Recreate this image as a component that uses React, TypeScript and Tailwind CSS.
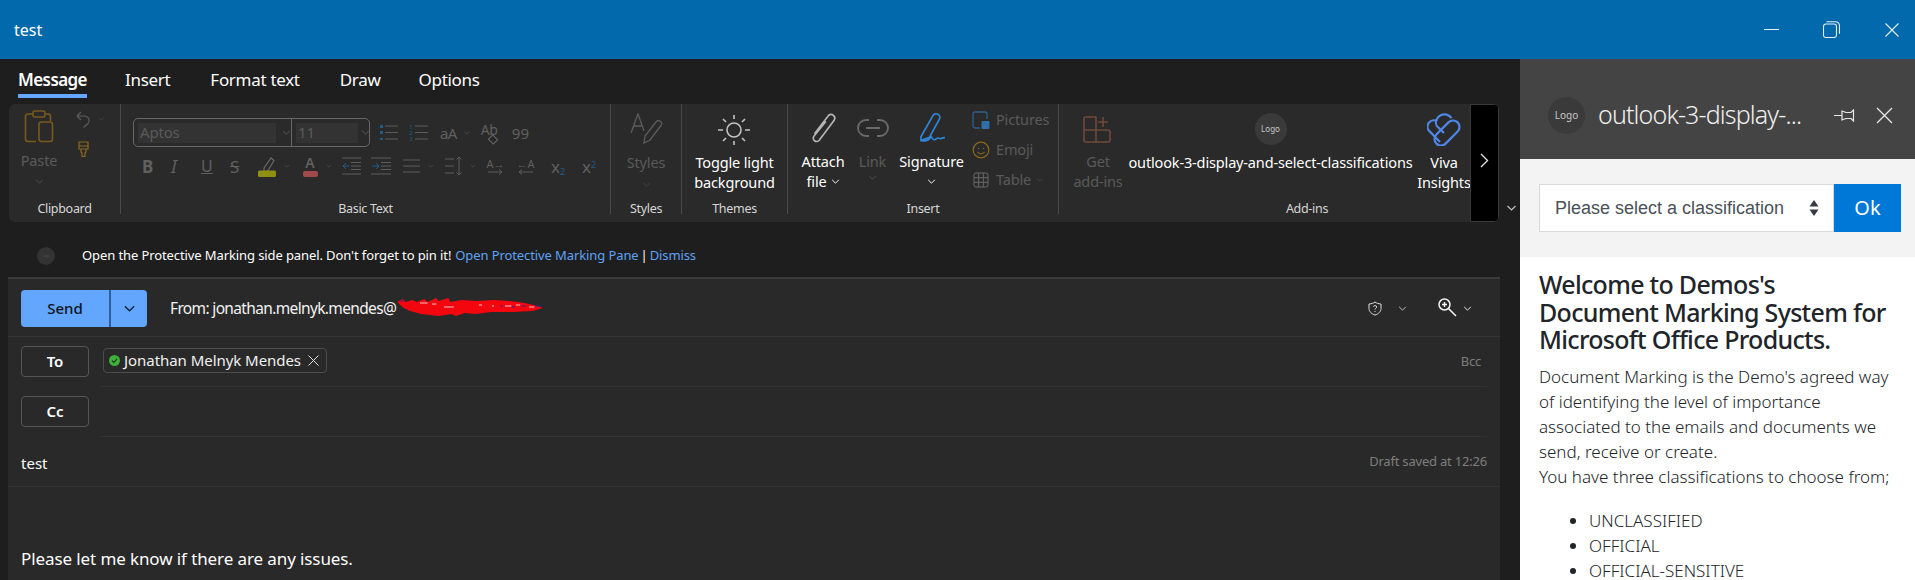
const ui = "font-['Noto_Sans','Open_Sans',sans-serif]";

function Chev({ className = "w-[8px] h-[5px]" }: { className?: string }) {
  return (
    <svg viewBox="0 0 10 6" className={`shrink-0 ${className}`} fill="none" stroke="currentColor" strokeWidth="1.2">
      <path d="M1 1l4 4 4-4" />
    </svg>
  );
}

function Lines({ ys, x1 = 0, x2 = 18, w = 18, h = 16, color = "#5c5c5c" }: { ys: number[]; x1?: number; x2?: number; w?: number; h?: number; color?: string }) {
  return (
    <svg width={w} height={h} viewBox={`0 0 ${w} ${h}`} fill="none" stroke={color} strokeWidth="1">
      {ys.map((y) => (
        <path key={y} d={`M${x1} ${y}H${x2}`} />
      ))}
    </svg>
  );
}

function Logo({ size, text }: { size: string; text: string }) {
  return (
    <div className={`flex shrink-0 items-center justify-center rounded-full bg-[#3a3a3a] text-[#c8c8c8] ${size} ${text}`}>Logo</div>
  );
}

function RibbonLabel({ children }: { children: string }) {
  return <div className="flex h-[16px] items-center justify-center pt-[6px] text-[12.500px] tracking-[-0.3px] text-[#d6d6d6]">{children}</div>;
}

function TwoLines({ a, b, dim }: { a: string; b?: React.ReactNode; dim?: boolean }) {
  return (
    <div className={`mt-[6px] text-center text-[14.500px] leading-[20px] tracking-[-0.15px] whitespace-nowrap ${dim ? "text-[#5a5a5a]" : "text-white"}`}>
      <div>{a}</div>
      <div className="flex h-[20px] items-center justify-center gap-[4px]">{b}</div>
    </div>
  );
}

function Clipboard() {
  return (
    <div className="flex h-[110px] w-[112px] shrink-0 flex-col border-r border-[#4a4a4a]">
      <div className="flex h-[94px] pl-[15px] pt-[6px]">
        <div className="flex w-[30px] flex-col items-center">
          <svg width="30" height="33" viewBox="0 0 30 33" fill="none" stroke="#7a5a1c" strokeWidth="1.6">
            <path d="M9 4H4a2.5 2.5 0 0 0-2.500 2.500V29a2.500 2.500 0 0 0 2.500 2.500h8" />
            <path d="M21 4h3a2.500 2.500 0 0 1 2.500 2.500V11" />
            <rect x="9" y="1" width="12" height="6" rx="2" />
            <rect x="15" y="12" width="13.500" height="19.500" rx="2.500" />
          </svg>
          <div className="mt-[7px] text-[14.500px] leading-[20px] tracking-[-0.15px] text-[#5a5a5a]">Paste</div>
          <Chev className="mt-[9px] h-[5px] w-[9px] text-[#4f4f4f]" />
        </div>
        <div className="ml-[22px] flex flex-col">
          <div className="flex items-center gap-[7px]">
            <svg width="15" height="18" viewBox="0 0 15 18" fill="none" stroke="#5c5c5c" strokeWidth="1.2">
              <path d="M1 6h8a4.500 4.500 0 0 1 3 7.500L7.500 17.500M1 6l4-4M1 6l4 4" />
            </svg>
            <Chev className="h-[4px] w-[6px] text-[#4a4a4a]" />
          </div>
          <svg className="ml-[2px] mt-[13px]" width="11" height="17" viewBox="0 0 11 17" fill="none" stroke="#8a6a1c" strokeWidth="1.2">
            <path d="M1 1h9v7H1zM1 5h9M3 8v3l1 1v3.500h3V12l1-1V8" />
          </svg>
        </div>
      </div>
      <div className="h-[2px]" />
      <RibbonLabel>Clipboard</RibbonLabel>
    </div>
  );
}

function BasicText() {
  const dim = "text-[#606060]";
  return (
    <div className="flex h-[110px] w-[490px] shrink-0 flex-col border-r border-[#4a4a4a]">
      <div className="h-[94px] pl-[12px] pt-[14px]">
        <div className="flex items-center">
          <div className="flex h-[29px] w-[237px] shrink-0 items-center rounded-[5px] border border-[#686868]">
            <div className="flex h-full w-[158px] items-center border-r border-[#686868] pl-[4px]">
              <div className="flex h-[20px] w-[138px] items-center bg-[#333333] pl-[2px] text-[15px] tracking-[-0.2px] text-[#5a5a5a]">Aptos</div>
              <Chev className="ml-[6px] h-[5px] w-[9px] text-[#585858]" />
            </div>
            <div className="flex h-full flex-1 items-center pl-[4px]">
              <div className="flex h-[20px] w-[62px] items-center bg-[#333333] pl-[2px] text-[15px] text-[#5a5a5a]">11</div>
              <Chev className="ml-[3px] h-[5px] w-[9px] text-[#585858]" />
            </div>
          </div>
          <div className="relative ml-[10px]">
            <Lines ys={[1, 7.500, 14]} x1={5} w={18} />
            <div className="absolute left-0 top-0 flex h-full flex-col justify-between py-[0.5px]">
              <span className="h-[2.500px] w-[2.500px] bg-[#1d5c8c]" />
              <span className="h-[2.500px] w-[2.500px] bg-[#1d5c8c]" />
              <span className="h-[2.500px] w-[2.500px] bg-[#1d5c8c]" />
            </div>
          </div>
          <div className="ml-[11px] flex items-center gap-[2px]">
            <div className="flex h-[18px] w-[4px] flex-col items-center justify-between text-[6px] leading-[6px] text-[#1d5c8c]">
              <span>1</span>
              <span>2</span>
              <span>3</span>
            </div>
            <Lines ys={[1, 7.500, 14]} w={13} x2={13} />
          </div>
          <span className={`ml-[12px] text-[15px] leading-[16px] tracking-[-0.6px] ${dim}`}>aA</span>
          <Chev className="ml-[7px] h-[4px] w-[6px] text-[#4f4f4f]" />
          <div className="relative ml-[11px] h-[22px] w-[18px]">
            <span className={`absolute left-0 top-0 text-[14px] leading-[16px] tracking-[-0.6px] ${dim}`}>Ab</span>
            <span className="absolute bottom-[1px] right-[2px] h-[7px] w-[8px] rotate-45 border border-[#6a6a6a]" />
          </div>
          <span className={`ml-[13px] text-[15px] leading-[16px] ${dim}`}>99</span>
        </div>
        <div className="mt-[7px] flex h-[24px] items-center pl-[9px]">
          <span className={`w-[10px] text-[17px] font-bold leading-none ${dim}`}>B</span>
          <span className={`ml-[19px] w-[12px] text-[18px] italic leading-none ${dim}`}>I</span>
          <span className={`ml-[18px] w-[12px] text-[16px] underline leading-none ${dim}`}>U</span>
          <span className={`ml-[17px] w-[14px] text-[17px] line-through leading-none ${dim}`}>S</span>
          <svg className="ml-[14px]" width="18" height="21" viewBox="0 0 18 21" fill="none">
            <path d="M6 12l7-10 3 2.500-6 10-4 1.500z" stroke="#6a6a6a" strokeWidth="1.200" />
            <rect x="0" y="14.500" width="18" height="6.500" rx="1.500" fill="#8f8f14" />
          </svg>
          <Chev className="ml-[8px] h-[4px] w-[6px] text-[#4f4f4f]" />
          <div className="ml-[12px] flex w-[16px] flex-col items-center">
            <span className={`text-[14px] font-semibold leading-[13px] ${dim}`}>A</span>
            <span className="mt-[2px] h-[6px] w-[15px] rounded-[2px] bg-[#a24a4a]" />
          </div>
          <Chev className="ml-[8px] h-[4px] w-[6px] text-[#4f4f4f]" />
          <svg className="ml-[10px]" width="19" height="18" viewBox="0 0 19 18" fill="none" strokeWidth="1">
            <path d="M0 1h19M9 5.500h10M9 9h10M9 12.500h10M0 17h19" stroke="#5c5c5c" />
            <path d="M7 9H1M1 9l3-3M1 9l3 3" stroke="#1d5c8c" />
          </svg>
          <svg className="ml-[10px]" width="20" height="18" viewBox="0 0 20 18" fill="none" strokeWidth="1">
            <path d="M0 1h20M10 5.500h10M10 9h10M10 12.500h10M0 17h20" stroke="#5c5c5c" />
            <path d="M1 9h7M8 9L5 6M8 9l-3 3" stroke="#1d5c8c" />
          </svg>
          <div className="ml-[12px]">
            <Lines ys={[2, 8, 14]} w={17} x2={17} />
          </div>
          <Chev className="ml-[8px] h-[4px] w-[6px] text-[#4f4f4f]" />
          <svg className="ml-[11px]" width="18" height="20" viewBox="0 0 18 20" fill="none" stroke="#5c5c5c" strokeWidth="1">
            <path d="M0 3h9M0 10h9M0 17h9M14 1v18M11.500 3.500L14 1l2.500 2.500M11.500 16.500L14 19l2.500-2.500" />
          </svg>
          <Chev className="ml-[7px] h-[4px] w-[6px] text-[#4f4f4f]" />
          <div className="ml-[12px] flex w-[15px] flex-col items-center">
            <span className={`whitespace-nowrap text-[11px] leading-[11px] ${dim}`}>A→</span>
            <svg width="15" height="6" viewBox="0 0 15 6" fill="none" stroke="#5c5c5c"><path d="M0 3h14M11 0.500L14 3l-3 2.500" /></svg>
          </div>
          <div className="ml-[15px] flex w-[15px] flex-col items-center">
            <span className={`whitespace-nowrap text-[11px] leading-[11px] ${dim}`}>←A</span>
            <svg width="15" height="6" viewBox="0 0 15 6" fill="none" stroke="#5c5c5c"><path d="M15 3H1M4 0.500L1 3l3 2.500" /></svg>
          </div>
          <span className={`ml-[18px] w-[14px] whitespace-nowrap text-[17px] leading-none ${dim}`}>
            x<sub className="text-[9px] font-normal text-[#1d5c8c]">2</sub>
          </span>
          <span className={`ml-[17px] w-[13px] whitespace-nowrap text-[17px] leading-none ${dim}`}>
            x<sup className="text-[9px] font-normal text-[#1d5c8c]">2</sup>
          </span>
        </div>
      </div>
      <div className="h-[2px]" />
      <RibbonLabel>Basic Text</RibbonLabel>
    </div>
  );
}

function InsertGroup() {
  const small = "flex h-[30px] items-center text-[14.500px] tracking-[-0.15px] text-[#5a5a5a]";
  return (
    <div className="flex h-[110px] w-[271px] shrink-0 flex-col border-r border-[#4a4a4a]">
      <div className="flex h-[96px]">
        <div className="ml-[10px] flex w-[50px] flex-col items-center pt-[7px]">
          <svg className="h-[34px]" width="28" height="36" viewBox="0 0 28 36" fill="none" stroke="#b4b4b4" strokeWidth="1.800">
            <path d="M5 24L20 4.500a4 4 0 0 1 6 5L10 31a3.500 3.500 0 0 1-5.500-4.500L17 11" />
          </svg>
          <TwoLines
            a="Attach"
            b={
              <>
                file <Chev className="h-[5px] w-[9px] text-white" />
              </>
            }
          />
        </div>
        <div className="ml-[6px] flex w-[37px] flex-col items-center pt-[7px]">
          <svg className="my-[7px]" width="32" height="20" viewBox="0 0 32 20" fill="none" stroke="#6a6a6a" strokeWidth="1.800">
            <path d="M12 2H9a8 8 0 0 0 0 16h3M20 2h3a8 8 0 0 1 0 16h-3M9 10h14" />
          </svg>
          <div className="mt-[6px] text-[14.500px] leading-[20px] tracking-[-0.15px] text-[#5a5a5a]">Link</div>
          <Chev className="mt-[4px] h-[5px] w-[9px] text-[#4f4f4f]" />
        </div>
        <div className="ml-[8px] flex w-[65px] flex-col items-center pt-[7px]">
          <svg className="h-[34px]" width="32" height="37" viewBox="0 0 32 37" fill="none" stroke="#2f86d8" strokeWidth="1.800">
            <path d="M4 28L17 5a4 4 0 0 1 7 4L13 29l-9 3zM4 32c6 2 9-1 11-4 2 4 4 4 6 2s3 1 5 0 3-1 4-1" />
          </svg>
          <TwoLines a="Signature" b={<Chev className="h-[5px] w-[9px] text-white" />} />
        </div>
        <div className="ml-[8px] flex flex-col pt-[1px]">
          <div className={small}>
            <svg className="mr-[6px]" width="18" height="18" viewBox="0 0 18 18" fill="none">
              <path d="M8 17H3a2 2 0 0 1-2-2V3a2 2 0 0 1 2-2h10a2 2 0 0 1 2 2v5" stroke="#2d5f8f" strokeWidth="1.300" />
              <rect x="9.500" y="10" width="8" height="8" rx="1" fill="#2f6ea8" />
            </svg>
            Pictures
          </div>
          <div className={small}>
            <svg className="mr-[6px]" width="18" height="18" viewBox="0 0 18 18" fill="none" stroke="#8a6a1c" strokeWidth="1.200">
              <circle cx="9" cy="9" r="7.800" />
              <path d="M5.500 11c2 2.500 5 2.500 7 0M6.500 7v1M11.500 7v1" />
            </svg>
            Emoji
          </div>
          <div className={small}>
            <svg className="mr-[6px]" width="18" height="18" viewBox="0 0 18 18" fill="none" stroke="#6a6a6a" strokeWidth="1">
              <rect x="2" y="2" width="14" height="14" rx="2" />
              <path d="M2 6.700h14M2 11.300h14M6.700 2v14M11.300 2v14" />
            </svg>
            Table
            <Chev className="ml-[6px] h-[4px] w-[6px] text-[#4f4f4f]" />
          </div>
        </div>
      </div>
      <RibbonLabel>Insert</RibbonLabel>
    </div>
  );
}

function AddIns() {
  return (
    <div className="flex h-[110px] w-[411px] shrink-0 flex-col overflow-hidden">
      <div className="flex h-[96px]">
        <div className="ml-[14px] flex w-[50px] flex-col items-center pt-[12px]">
          <svg width="30" height="28" viewBox="0 0 30 28" fill="none" stroke="#6e4a38" strokeWidth="1.600">
            <path d="M1 14h12V1H3a2 2 0 0 0-2 2zM1 14v10a2 2 0 0 0 2 2h10V14M13 14h12a2 2 0 0 1 2 2v8a2 2 0 0 1-2 2H13M20 1v10M15 6h10" />
          </svg>
          <div className="mt-[1px]">
            <TwoLines a="Get" b="add-ins" dim />
          </div>
        </div>
        <div className="ml-[4px] flex w-[287px] shrink-0 flex-col items-center pt-[9px]">
          <Logo size="h-[32px] w-[32px]" text="text-[8px] bg-[#3a3a3a]" />
          <div className="mt-[1px]">
            <TwoLines a="outlook-3-display-and-select-classifications" />
          </div>
        </div>
        <div className="ml-[9px] flex w-[42px] shrink-0 flex-col items-center pt-[8px]">
          <svg width="34" height="34" viewBox="0 0 34 34" fill="none" stroke="#4f86e8" strokeWidth="2.200">
            <rect x="5" y="14.500" width="30" height="13" rx="6.500" transform="rotate(-45 20 21)" />
            <path d="M9.300 13.500a8.500 8.500 0 0 1 15.200-7.300" />
            <path d="M9.300 13.500L17 21" />
            <path d="M10 9.200a6.300 6.300 0 0 0-7.300 10.200L13 30" />
          </svg>
          <TwoLines a="Viva" b="Insights" />
        </div>
      </div>
      <div className="w-[496px]">
        <RibbonLabel>Add-ins</RibbonLabel>
      </div>
    </div>
  );
}

function Ribbon() {
  return (
    <div className="flex h-[118px] items-start">
      <div className="ml-[9px] flex h-[118px] w-[1490px] overflow-hidden rounded-[6px] bg-[#2a2a2a]">
        <Clipboard />
        <BasicText />
        <div className="flex h-[110px] w-[71px] shrink-0 flex-col items-center border-r border-[#4a4a4a]">
          <div className="flex h-[96px] flex-col items-center pt-[9px]">
            <svg width="33" height="33" viewBox="0 0 33 33" fill="none" stroke="#5c5c5c" strokeWidth="1.300">
              <path d="M1 20L8 1l6 17M3.500 13h8.500" />
              <path d="M14 30l1-7L26 9a3 3 0 0 1 5 3.500L20 27z" />
            </svg>
            <div className="mt-[6px] text-[14.500px] leading-[20px] tracking-[-0.15px] text-[#5a5a5a]">Styles</div>
            <Chev className="mt-[10px] h-[5px] w-[9px] text-[#454545]" />
          </div>
          <RibbonLabel>Styles</RibbonLabel>
        </div>
        <div className="flex h-[110px] w-[106px] shrink-0 flex-col items-center border-r border-[#4a4a4a]">
          <div className="flex h-[96px] flex-col items-center pt-[10px]">
            <svg width="34" height="32" viewBox="0 0 34 32" fill="none" stroke="#c4c4c4" strokeWidth="1.600">
              <circle cx="17" cy="16" r="7" />
              <path d="M17 1v4M17 27v4M1 16h5M28 16h5M6 5l3 3M28 5l-3 3M6 27l3-3M28 27l-3-3" />
            </svg>
            <TwoLines a="Toggle light" b="background" />
          </div>
          <RibbonLabel>Themes</RibbonLabel>
        </div>
        <InsertGroup />
        <AddIns />
        <div className="flex h-[118px] w-[29px] shrink-0 items-start justify-center rounded-r-[4px] border border-[#3a3a3a] bg-black pt-[48px]">
          <svg width="9" height="15" viewBox="0 0 9 15" fill="none" stroke="#e6e6e6" strokeWidth="1.300">
            <path d="M1 1l6.500 6.500L1 14" />
          </svg>
        </div>
      </div>
      <Chev className="ml-[7px] mt-[101px] h-[6px] w-[11px] text-[#c0c0c0]" />
    </div>
  );
}

function Notice() {
  return (
    <div className="ml-[8px] flex h-[55px] w-[1492px] items-center pl-[29px] pt-[13px] text-[13px] tracking-[-0.1px] text-white">
      <Logo size="h-[18px] w-[18px]" text="text-[3px] !bg-[#333333] !text-[#555555]" />
      <span className="ml-[27px]">Open the Protective Marking side panel. Don't forget to pin it!</span>
      <span className="ml-[4px] text-[#5ea3f5]">Open Protective Marking Pane</span>
      <span className="mx-[2px]">|</span>
      <span className="text-[#5ea3f5]">Dismiss</span>
    </div>
  );
}

function FieldButton({ children }: { children: string }) {
  return (
    <div className="flex h-[31px] w-[68px] shrink-0 items-center justify-center rounded-[4px] border border-[#555555] text-[15px] font-semibold text-white">
      {children}
    </div>
  );
}

function Compose() {
  return (
    <div className="ml-[8px] flex w-[1492px] flex-1 flex-col border-t-2 border-[#3a3a3a] bg-[#292929] text-white">
      <div className="flex h-[58px] shrink-0 items-center border-b border-[#353535] pl-[13px] pt-[2px]">
        <div className="flex h-[37px] w-[126px] items-center rounded-[4px] bg-[#62a6fe] text-[#0c1420]">
          <div className="flex h-full w-[90px] items-center justify-center border-r-2 border-[#2f5f96] text-[15px] font-medium">Send</div>
          <div className="flex flex-1 justify-center">
            <Chev className="h-[7px] w-[13px] text-[#15253a]" />
          </div>
        </div>
        <div className="relative ml-[23px] text-[15.500px] tracking-[-0.65px] text-[#f2f2f2]">
          From: jonathan.melnyk.mendes@
          <svg className="absolute left-[226px] top-[-3px]" width="146" height="26" viewBox="0 0 134 26" preserveAspectRatio="none" fill="none">
            <path d="M1 8l5-3 3 3 6-2 4 2 7-3 3 3 8-4 2 3 9-3 2 4 10-2 14 1 16-1 14 1 14 2 12 3 5 2-10 3-18 1-20 0-14 2-10-1-8 3-4-2-12 2-16-2-10-3-6-3z" fill="#f4060f" />
            <path d="M22 9h7M33 10h4M44 13h9M76 11h3M88 12h2M100 12h6M110 11h4M122 13h5" stroke="#e9c8c8" strokeWidth="1" />
            <path d="M4 7h3M96 12h2M106 13h3M116 12h3M128 12h5" stroke="#25259c" strokeWidth="1" />
          </svg>
        </div>
        <div className="ml-auto flex items-center pr-[28px] text-[#d0d0d0]">
          <svg width="14" height="15" viewBox="0 0 14 15" fill="none" stroke="#e0e0e0" strokeWidth="1">
            <path d="M7 1c1.500 1.200 3.500 1.800 6 2v4.500c0 3-2.500 5.500-6 6.500-3.500-1-6-3.500-6-6.500V3c2.500-.2 4.500-.8 6-2z" />
            <path d="M5.300 5.700c.3-1.500 3.400-1.500 3.400.3 0 1.200-1.700 1.300-1.700 2.500M7 10v1" />
          </svg>
          <Chev className="ml-[16px] h-[5px] w-[9px] text-[#c0c0c0]" />
          <svg className="ml-[31px] -mt-[3px]" width="19" height="19" viewBox="0 0 19 19" fill="none" stroke="#f4f4f4" strokeWidth="1.500">
            <circle cx="6.500" cy="6.500" r="5.500" />
            <path d="M10.500 10.500L18 18M6.500 4v5M4 6.500h5" />
          </svg>
          <Chev className="ml-[6px] h-[5px] w-[9px] text-[#e8e8e8]" />
        </div>
      </div>
      <div className="flex h-[50px] shrink-0 pl-[13px] pr-[13px]">
        <div className="w-[79px] pt-[9px]">
          <FieldButton>To</FieldButton>
        </div>
        <div className="flex flex-1 items-start justify-between border-b border-[#333333] pl-[3px] pt-[11px] pr-[6px]">
          <div className="flex h-[25px] w-[224px] items-center rounded-[4px] border border-[#4c4c4c] pl-[5px] text-[15px] tracking-[-0.05px] text-[#f0f0f0]">
            <svg className="shrink-0" width="11" height="11" viewBox="0 0 11 11">
              <circle cx="5.500" cy="5.500" r="5.500" fill="#3fae3a" />
              <path d="M3 5.700l1.800 1.700L8 3.800" stroke="#16330f" strokeWidth="1.100" fill="none" />
            </svg>
            <span className="ml-[4px] whitespace-nowrap">Jonathan Melnyk Mendes</span>
            <svg className="ml-[7px] shrink-0" width="11" height="11" viewBox="0 0 11 11" stroke="#e0e0e0" strokeWidth="1">
              <path d="M0.500 0.500l10 10M10.500 0.500l-10 10" />
            </svg>
          </div>
          <span className="pt-[4px] text-[13px] tracking-[-0.2px] text-[#7e7e7e]">Bcc</span>
        </div>
      </div>
      <div className="flex h-[50px] shrink-0 pl-[13px] pr-[13px]">
        <div className="w-[79px] pt-[9px]">
          <FieldButton>Cc</FieldButton>
        </div>
        <div className="flex-1 border-b border-[#333333]" />
      </div>
      <div className="flex h-[50px] shrink-0 items-center justify-between border-b border-[#333333] pl-[13px] pr-[13px]">
        <span className="pt-[3px] text-[15px] text-white">test</span>
        <span className="text-[13px] tracking-[-0.2px] text-[#7e7e7e]">Draft saved at 12:26</span>
      </div>
      <div className="pl-[13px] pt-[60px] text-[17px] leading-[24px] tracking-[-0.1px] text-white">
        Please let me know if there are any issues.
      </div>
    </div>
  );
}

function SidePanel() {
  return (
    <div className="flex h-[521px] w-[395px] shrink-0 flex-col overflow-hidden bg-white">
      <div className="flex h-[100px] shrink-0 items-center bg-[#444444] pl-[28px] pt-[12px]">
        <Logo size="h-[37px] w-[37px]" text="text-[10px]" />
        <span className="ml-[13px] w-[216px] whitespace-nowrap text-[25px] font-light tracking-[-0.85px] text-[#f0f0f0]">outlook-3-display-...</span>
        <svg className="ml-[20px]" width="21" height="13" viewBox="0 0 21 13" fill="none" stroke="#e8e8e8" strokeWidth="1.200">
          <path d="M0 6.500h8M8 2l4 1.500h5L19.500 1v11L17 9.500h-5L8 11z" />
        </svg>
        <svg className="ml-[21px]" width="17" height="17" viewBox="0 0 17 17" stroke="#e8e8e8" strokeWidth="1.300">
          <path d="M1 1l15 15M16 1L1 16" />
        </svg>
      </div>
      <div className="flex h-[98px] shrink-0 bg-[#f3f3f3] pl-[19px] pr-[14px] pt-[25px]">
        <div className="flex h-[48px] flex-1 items-center justify-between border border-[#d9d9d9] bg-white pl-[15px] pr-[14px] font-['Liberation_Sans',sans-serif] text-[18px] text-[#495057]">
          Please select a classification
          <svg width="10" height="16" viewBox="0 0 10 16" fill="#343a40">
            <path d="M5 0l4.500 6.500h-9zM5 16L.5 9.500h9z" />
          </svg>
        </div>
        <div className="flex h-[48px] w-[67px] items-center justify-center bg-[#0078d7] text-[20px] text-white">Ok</div>
      </div>
      <div className="pl-[19px] pr-[8px] pt-[14px] text-[#212529]">
        <h1 className="w-[355px] text-[25px] font-medium leading-[27.600px] tracking-[-0.7px]">
          Welcome to Demos's Document Marking System for Microsoft Office Products.
        </h1>
        <p className="mt-[10px] w-[355px] text-[17px] font-light leading-[25px]">
          Document Marking is the Demo's agreed way of identifying the level of importance associated to the emails and documents we send, receive or create.
          <br />
          You have three classifications to choose from;
        </p>
        <ul className="mt-[19px] list-disc pl-[50px] text-[17px] font-light leading-[25px]">
          <li>UNCLASSIFIED</li>
          <li>OFFICIAL</li>
          <li>OFFICIAL-SENSITIVE</li>
        </ul>
      </div>
    </div>
  );
}

export default function App() {
  const tabs = ["Insert", "Format text", "Draw", "Options"];
  const tabMargins = ["ml-[38px]", "ml-[40px]", "ml-[40px]", "ml-[38px]"];

  return (
    <div className={`flex h-[580px] w-[1915px] flex-col overflow-hidden bg-[#1e1e1e] ${ui}`}>
      <div className="flex h-[59px] shrink-0 items-center bg-[#0269ac] pl-[14px] text-[16px] text-white">
        test
        <div className="ml-auto flex items-center pr-[16px]">
          <div className="h-[1.500px] w-[15px] bg-[#e6eef5]" />
          <svg className="ml-[44px]" width="17" height="17" viewBox="0 0 17 17" fill="none" stroke="#e6eef5" strokeWidth="1.100">
            <rect x="0.500" y="3" width="13" height="13.500" rx="2.500" />
            <path d="M3.500 .7h9a4 4 0 0 1 4 4v8" />
          </svg>
          <svg className="ml-[45px]" width="14" height="14" viewBox="0 0 14 14" stroke="#e6eef5" strokeWidth="1.100">
            <path d="M.5 .5l13 13M13.500 .5l-13 13" />
          </svg>
        </div>
      </div>
      <div className="flex min-h-0 flex-1">
        <div className="flex w-[1520px] shrink-0 flex-col">
          <div className="flex h-[45px] shrink-0 items-start pl-[18px] pt-[9px] text-[17px] tracking-[-0.3px] text-white">
            <div className="flex h-[30px] w-[69px] flex-col items-center border-b-[4px] border-[#62a6fe] font-semibold leading-[24px] tracking-[-0.6px]">Message</div>
            {tabs.map((t, i) => (
              <div key={t} className={`${tabMargins[i]} leading-[24px]`}>
                {t}
              </div>
            ))}
          </div>
          <Ribbon />
          <Notice />
          <Compose />
        </div>
        <SidePanel />
      </div>
    </div>
  );
}
